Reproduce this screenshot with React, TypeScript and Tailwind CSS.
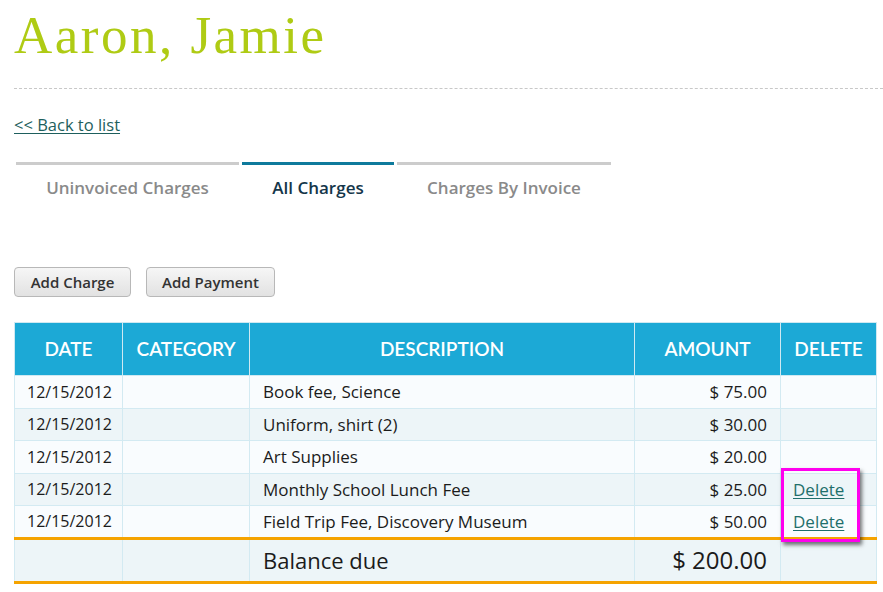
import React from 'react'

const rows = [
  { date: '12/15/2012', desc: 'Book fee, Science', amount: '$ 75.00', del: false },
  { date: '12/15/2012', desc: 'Uniform, shirt (2)', amount: '$ 30.00', del: false },
  { date: '12/15/2012', desc: 'Art Supplies', amount: '$ 20.00', del: false },
  { date: '12/15/2012', desc: 'Monthly School Lunch Fee', amount: '$ 25.00', del: true },
  { date: '12/15/2012', desc: 'Field Trip Fee, Discovery Museum', amount: '$ 50.00', del: true },
]

const tabs = [
  { label: 'Uninvoiced Charges', w: 'w-[223px]', active: false },
  { label: 'All Charges', w: 'w-[152px]', active: true },
  { label: 'Charges By Invoice', w: 'w-[214px]', active: false },
]

export default function App() {
  return (
    <div className="relative w-[883px] h-[592px] overflow-hidden bg-white font-['Open_Sans','Lato',sans-serif] text-[#1b1b1b]">
      <div className="pl-[14px]">
        <h1 className="pt-[9px] h-[60px] font-['Liberation_Serif',serif] text-[53px] leading-[53px] tracking-[2.5px] text-[#afcb14] font-normal">
          Aaron, Jamie
        </h1>
        <div className="mt-[28px] border-b border-dashed border-[#c8c8c8]" />

        <a href="#" className="inline-block mt-[26px] text-[16.5px] leading-[20px] text-[#1e5f5d] underline underline-offset-2">
          &lt;&lt; Back to list
        </a>

        <div className="flex gap-[3px] mt-[25px] pl-[2px]">
          {tabs.map((t) => (
            <div
              key={t.label}
              className={`${t.w} border-t-[3px] ${t.active ? 'border-[#0e7a9c] text-[#14364a]' : 'border-[#cccccc] text-[#8a8a8a]'} pt-[13px] h-[40px] text-center text-[17px] font-semibold leading-[20px]`}
            >
              {t.label}
            </div>
          ))}
        </div>

        <div className="flex gap-[15px] mt-[65px]">
          <button className="h-[30px] w-[117px] rounded-[4px] border border-[#b8b8b8] bg-gradient-to-b from-[#f6f6f6] to-[#e2e2e2] text-[15px] font-semibold text-[#333]">
            Add Charge
          </button>
          <button className="h-[30px] w-[129px] rounded-[4px] border border-[#b8b8b8] bg-gradient-to-b from-[#f6f6f6] to-[#e2e2e2] text-[15px] font-semibold text-[#333]">
            Add Payment
          </button>
        </div>

        <table className="mt-[25px] w-[862px] border-collapse table-fixed text-[17px]">
          <colgroup>
            <col className="w-[108px]" />
            <col className="w-[127px]" />
            <col className="w-[385px]" />
            <col className="w-[146px]" />
            <col className="w-[96px]" />
          </colgroup>
          <thead>
            <tr className="h-[53px] bg-[#1ca9d6] text-white text-[19px] font-['Lato',sans-serif] font-semibold">
              {['DATE', 'CATEGORY', 'DESCRIPTION', 'AMOUNT', 'DELETE'].map((h) => (
                <th key={h} className="border border-[#cfe9f2] font-semibold text-center">
                  {h}
                </th>
              ))}
            </tr>
          </thead>
          <tbody>
            {rows.map((r, i) => (
              <tr key={i} className={`h-[32.5px] ${i % 2 === 0 ? 'bg-[#f9fcfe]' : 'bg-[#edf5f8]'}`}>
                <td className="border border-[#d3eaf2] pl-[12px] text-[16px]">{r.date}</td>
                <td className="border border-[#d3eaf2]" />
                <td className="border border-[#d3eaf2] pl-[13px]">{r.desc}</td>
                <td className="border border-[#d3eaf2] pr-[13px] text-right">{r.amount}</td>
                <td className="border border-[#d3eaf2] pl-[12px]">
                  {r.del && (
                    <a href="#" className="text-[#1f6f6b] underline underline-offset-2">
                      Delete
                    </a>
                  )}
                </td>
              </tr>
            ))}
            <tr className="h-[44px] bg-[#edf5f8] border-t-[3px] border-b-[3px] border-t-[#f5a300] border-b-[#f5a300]">
              <td className="border-x border-[#d3eaf2]" />
              <td className="border-x border-[#d3eaf2]" />
              <td className="border-x border-[#d3eaf2] pl-[13px] text-[22px]">Balance due</td>
              <td className="border-x border-[#d3eaf2] pr-[13px] text-right text-[24px]">$ 200.00</td>
              <td className="border-x border-[#d3eaf2]" />
            </tr>
          </tbody>
        </table>
      </div>

      <div className="absolute left-[781px] top-[468px] w-[79px] h-[74px] border-[3px] border-[#ff00ee] shadow-[2px_3px_4px_rgba(0,0,0,0.55)]" />
    </div>
  )
}
